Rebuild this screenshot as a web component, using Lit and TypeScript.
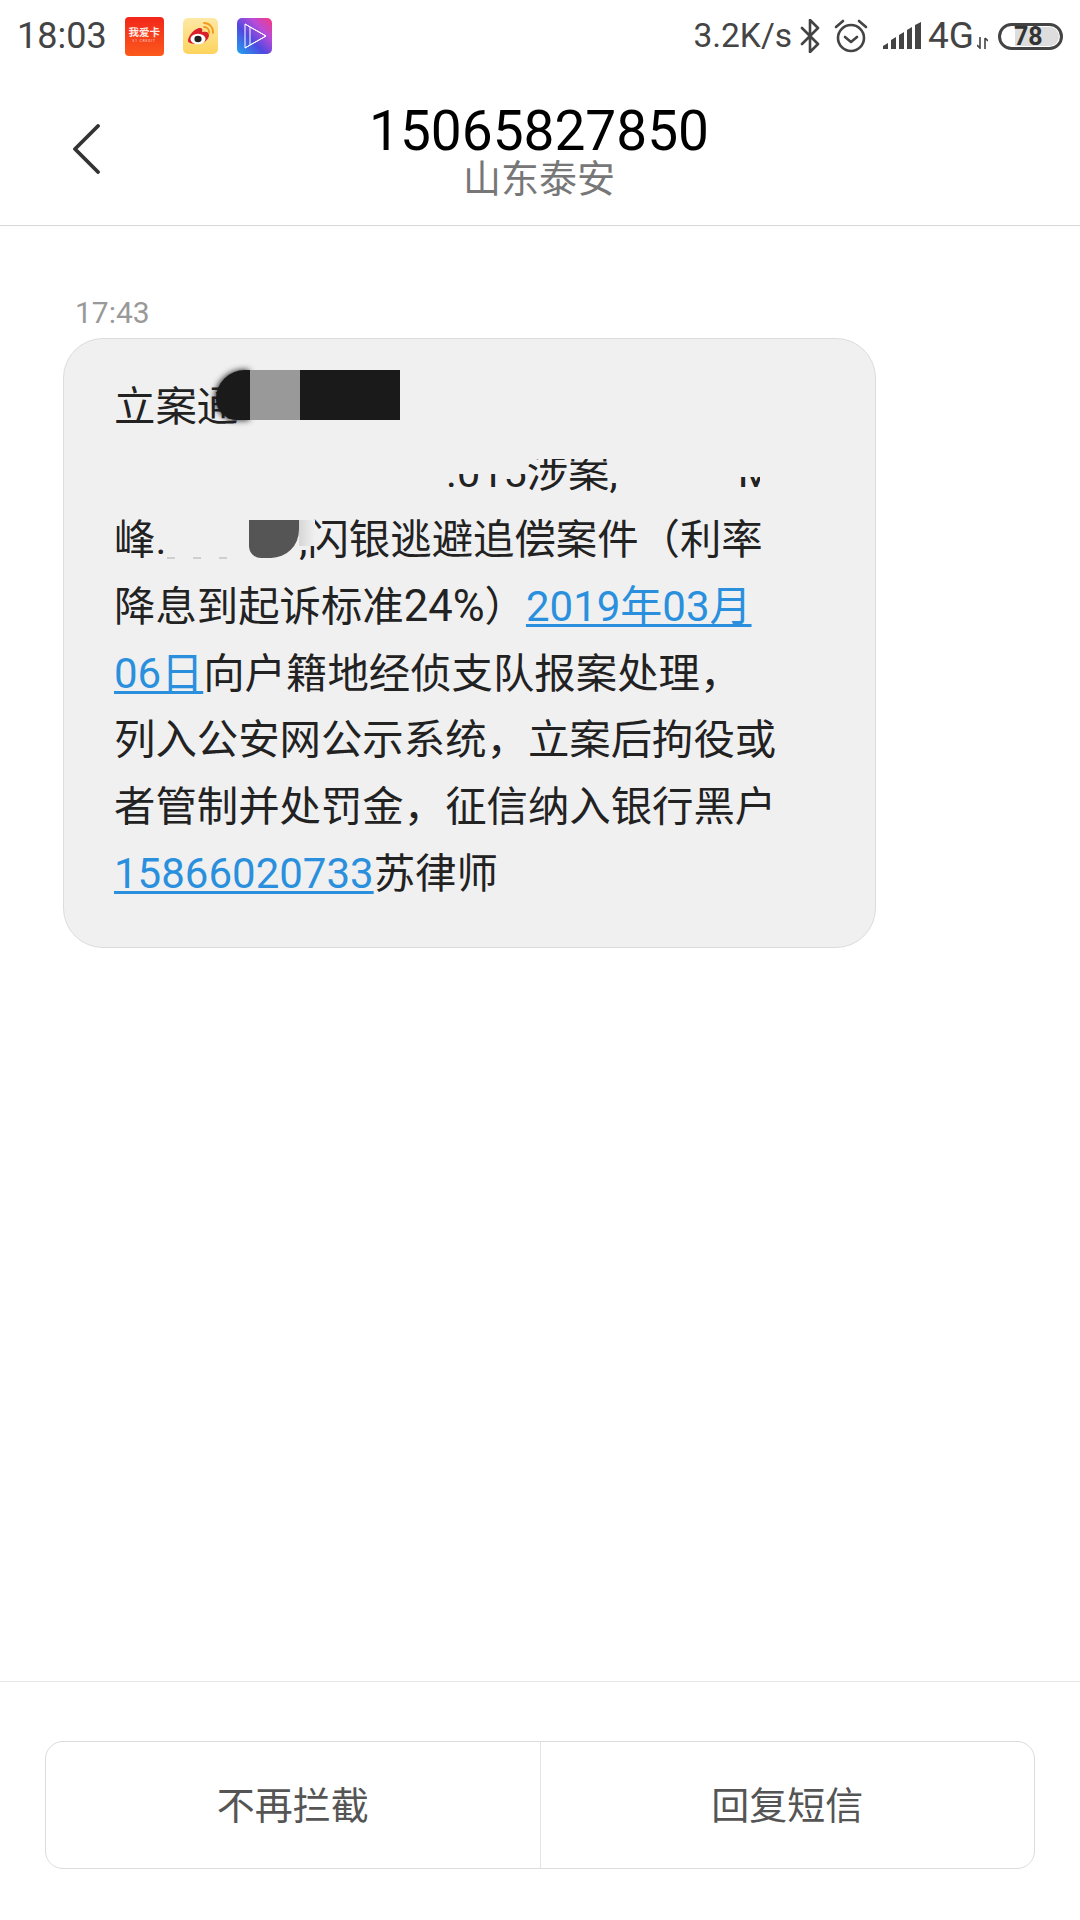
import { LitElement, html, css } from 'lit';
import { customElement } from 'lit/decorators.js';

const FONT = css`Roboto, "Noto Sans CJK SC", sans-serif`;

@customElement('status-bar')
class StatusBar extends LitElement {
  static styles = css`
    :host {
      display: flex;
      align-items: center;
      height: 72px;
      padding: 0 17px;
      color: #444;
      font-family: ${FONT};
    }
    .time { font-size: 36px; line-height: 72px; }
    .apps { display: flex; align-items: center; margin-left: 18px; }
    .app { display: block; }
    .app + .app { margin-left: 19px; }
    .card {
      width: 39px;
      height: 39px;
      border-radius: 4px;
      background: linear-gradient(#f2261a, #fb5a1c);
      color: #fff;
      display: flex;
      flex-direction: column;
      align-items: center;
      justify-content: center;
      overflow: hidden;
    }
    .card b { font-size: 10.5px; line-height: 13px; margin-top: -3px; white-space: nowrap; opacity: .9; }
    .card i { font-size: 3px; line-height: 4px; font-style: normal; letter-spacing: 1px; opacity: .8; }
    .right { margin-left: auto; display: flex; align-items: center; }
    .speed { font-size: 33.5px; line-height: 72px; }
    .lte { font-size: 37px; line-height: 72px; margin-left: 7px; }
    svg { display: block; flex: none; }
    .bt { margin-left: 8px; }
    .alarm { margin-left: 14px; }
    .signal { margin-left: 15px; }
    .arrows { margin: 14px 0 0 3px; }
    .battery {
      position: relative;
      width: 65px;
      height: 27px;
      box-sizing: border-box;
      border: 3px solid #444;
      border-radius: 14px;
      margin-left: 10px;
      display: flex;
      justify-content: flex-end;
      padding: 1px;
    }
    .fill { width: 44px; background: #ddd; border-radius: 0 10px 10px 0; }
    .level {
      position: absolute;
      left: 13px;
      top: -4px;
      font-size: 25px;
      line-height: 29px;
      font-weight: 700;
      color: #333;
    }
  `;

  render() {
    return html`
      <span class="time">18:03</span>
      <div class="apps">
        <div class="app card"><b>我爱卡</b><i>51 CREDIT</i></div>
        <svg class="app" width="35" height="36" viewBox="0 0 35 36">
          <defs>
            <linearGradient id="wb" x1="0" y1="0" x2="0" y2="1">
              <stop offset="0" stop-color="#fde9a6" /><stop offset="1" stop-color="#fdd35c" />
            </linearGradient>
          </defs>
          <rect width="35" height="36" rx="5" fill="url(#wb)" />
          <path d="M5 23c0-5 6-12 11-13 3-.5 4 1 3 4 4-1 7 0 7 3 0 5-6 9-12 9-5 0-9-1-9-3z" fill="#d9202a" />
          <ellipse cx="15" cy="21" rx="7.5" ry="5.2" fill="#fff" />
          <ellipse cx="15" cy="21" rx="3.6" ry="3.2" fill="#222" />
          <path d="M21 9a5 5 0 0 1 5 6M21 5a9 9 0 0 1 9 10" fill="none" stroke="#f09a1e" stroke-width="1.8" stroke-linecap="round" />
        </svg>
        <svg class="app" width="35" height="36" viewBox="0 0 35 36">
          <defs>
            <linearGradient id="pl" x1="0" y1="1" x2="1" y2="0">
              <stop offset="0" stop-color="#1fa6f0" /><stop offset=".4" stop-color="#4f49e0" />
              <stop offset=".7" stop-color="#b94bd8" /><stop offset="1" stop-color="#f9387f" />
            </linearGradient>
          </defs>
          <rect width="35" height="36" rx="5" fill="url(#pl)" />
          <path d="M8 6l21 12-21 12zM13 9v18l-5 3M8 6l5 3 16 9M13 27l16-9" fill="none" stroke="#fff" stroke-width="1" stroke-linejoin="round" />
        </svg>
      </div>
      <div class="right">
        <span class="speed">3.2K/s</span>
        <svg class="bt" width="20" height="34" viewBox="0 0 20 34">
          <path d="M2 9l16 16-8 8V1l8 8L2 25" fill="none" stroke="#444" stroke-width="2.6" stroke-linejoin="round" stroke-linecap="round" />
        </svg>
        <svg class="alarm" width="34" height="34" viewBox="0 0 34 34">
          <circle cx="17" cy="19" r="13" fill="none" stroke="#444" stroke-width="2.6" />
          <path d="M11 18l6 5 6-5M2 8l7-6M32 8l-7-6" fill="none" stroke="#444" stroke-width="2.6" stroke-linecap="round" stroke-linejoin="round" />
        </svg>
        <svg class="signal" width="38" height="28" viewBox="0 0 38 28">
          <path d="M0 27v-3l5-3v6zM8 27v-9l5-3v12zM16 27V13l5-3v17zM24 27V8l5-3v22zM32 27V3l6-3v27z" fill="#444" />
        </svg>
        <span class="lte">4G</span>
        <svg class="arrows" width="11" height="12" viewBox="0 0 11 12">
          <path d="M3 0v11M0 8l3 3 0-3M8 12V1M8 1l3 3" fill="none" stroke="#444" stroke-width="1.6" />
        </svg>
        <div class="battery"><div class="fill"></div><span class="level">78</span></div>
      </div>
    `;
  }
}

@customElement('app-root')
class AppRoot extends LitElement {
  static styles = css`
    :host {
      display: flex;
      flex-direction: column;
      width: 1080px;
      height: 1920px;
      background: #fff;
      overflow: hidden;
      font-family: ${FONT};
    }
    header {
      position: relative;
      height: 154px;
      box-sizing: border-box;
      border-bottom: 1px solid #d8d8d8;
      padding: 30px 2px 0 0;
      text-align: center;
    }
    .back { position: absolute; left: 72px; top: 52px; }
    .number { font-size: 55px; line-height: 58px; color: #000; }
    .place { font-size: 38px; line-height: 38px; color: #777; }
    main { flex: 1; padding: 69px 0 0 63px; }
    .stamp { font-size: 30px; line-height: 36px; color: #999; margin-left: 12px; }
    .bubble {
      position: relative;
      width: 813px;
      height: 610px;
      box-sizing: border-box;
      margin-top: 7px;
      padding: 34.5px 0 0 50px;
      background: #f0f0f1;
      border: 1px solid #dcdcdc;
      border-radius: 40px;
      font-size: 41.4px;
      line-height: 66.8px;
      color: #222;
    }
    .line { white-space: nowrap; height: 66.8px; }
    .frag { padding-left: 332px; }
    .frag-gap { display: inline-block; width: 120px; }
    a {
      color: #2a90dd;
      font-size: 42px;
      text-decoration: underline;
      text-underline-offset: 3px;
      text-decoration-thickness: 3px;
    }
    .num { font-size: 43.5px; }
    .gap { display: inline-block; width: 133px; }
    /* redaction marks that lie over the message text */
    .patch { position: absolute; background: #f0f0f1; }
    .cut-digits { left: 363px; top: 108px; width: 100px; height: 27px; }
    .cut-word { left: 463px; top: 100px; width: 90px; height: 20px; }
    .cut-tail { left: 665px; top: 108px; width: 60px; height: 30px; }
    .cut-tail-side { left: 696px; top: 130px; width: 30px; height: 32px; }
    .smudge {
      position: absolute;
      left: 185px;
      top: 181px;
      width: 50px;
      height: 38px;
      background: #555;
      border-radius: 0 0 28px 12px;
    }
    .haze {
      position: absolute;
      left: 235px;
      top: 181px;
      width: 16px;
      height: 26px;
      background: linear-gradient(90deg, #d6d6d6, #f0f0f1);
    }
    .specks {
      position: absolute;
      left: 103px;
      top: 218px;
      width: 76px;
      height: 2px;
      background: repeating-linear-gradient(90deg, #cfcfcf 0 8px, transparent 8px 26px);
    }
    .mark { position: absolute; top: 31px; height: 50px; }
    .mark.a {
      left: 152px;
      width: 34px;
      background: #1a1a1a;
      border-radius: 30px 0 0 22px;
      box-shadow: -1px 0 6px #1a1a1a;
    }
    .mark.b { left: 186px; width: 50px; background: #999; }
    .mark.c { left: 236px; width: 100px; background: #1a1a1a; }
    footer { border-top: 1px solid #e6e6e6; height: 239px; box-sizing: border-box; padding: 59px 45px 0; }
    .actions {
      display: flex;
      height: 128px;
      box-sizing: border-box;
      border: 1px solid #dcdcdc;
      border-radius: 18px;
    }
    .actions div {
      flex: 1;
      display: flex;
      align-items: center;
      justify-content: center;
      padding-bottom: 5px;
      font-size: 38px;
      color: #555;
    }
    .actions div:first-child { border-right: 1px solid #e4e4e4; }
  `;

  render() {
    return html`
      <status-bar></status-bar>
      <header>
        <svg class="back" width="28" height="50" viewBox="0 0 28 50">
          <path d="M26 2L3 25l23 23" fill="none" stroke="#333" stroke-width="3.8" stroke-linecap="round" stroke-linejoin="round" />
        </svg>
        <div class="number">15065827850</div>
        <div class="place">山东泰安</div>
      </header>
      <main>
        <div class="stamp">17:43</div>
        <div class="bubble">
          <div class="line">立案通</div>
          <div class="line frag">.015涉案,<span class="frag-gap"></span>M</div>
          <div class="line">峰.<span class="gap"></span>,闪银逃避追偿案件（利率</div>
          <div class="line">降息到起诉标准<span class="num">24%</span>）<a>2019年03月</a></div>
          <div class="line"><a>06日</a>向户籍地经侦支队报案处理，</div>
          <div class="line">列入公安网公示系统，立案后拘役或</div>
          <div class="line">者管制并处罚金，征信纳入银行黑户</div>
          <div class="line"><a>15866020733</a>苏律师</div>
          <div class="patch cut-digits"></div>
          <div class="patch cut-word"></div>
          <div class="patch cut-tail"></div>
          <div class="patch cut-tail-side"></div>
          <div class="specks"></div>
          <div class="haze"></div>
          <div class="smudge"></div>
          <div class="mark a"></div>
          <div class="mark b"></div>
          <div class="mark c"></div>
        </div>
      </main>
      <footer>
        <div class="actions"><div>不再拦截</div><div>回复短信</div></div>
      </footer>
    `;
  }
}
